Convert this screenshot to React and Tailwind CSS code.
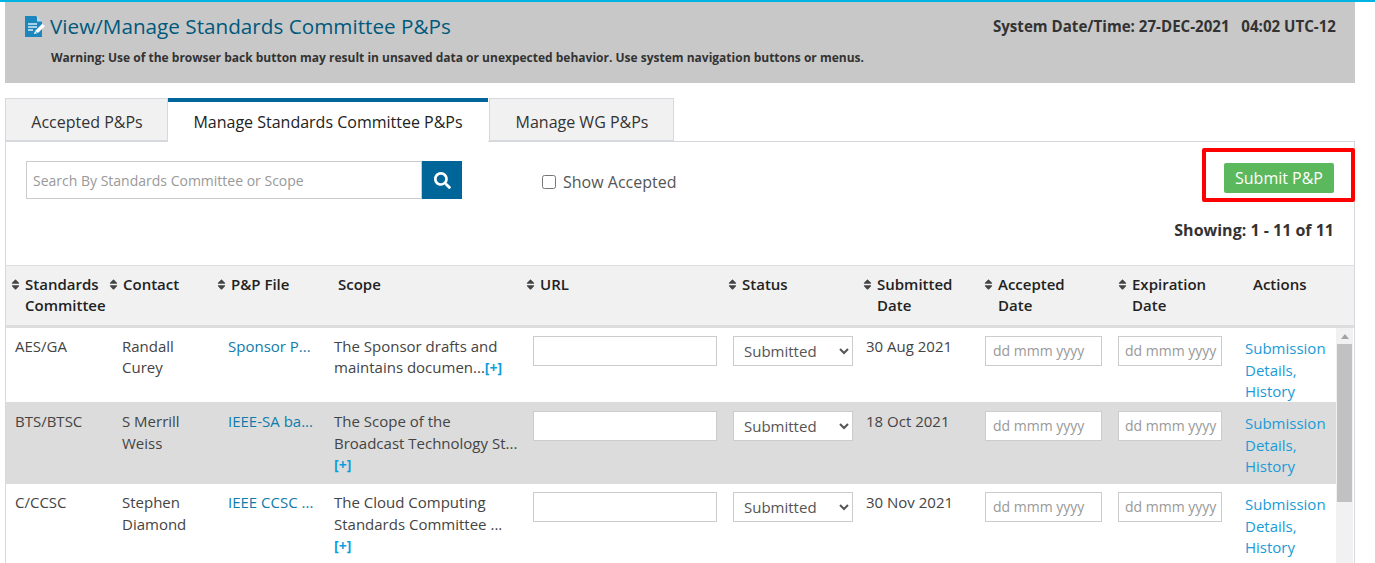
import { FaSearch, FaSort } from 'react-icons/fa';

const rows = [
  {
    committee: 'AES/GA',
    contact: ['Randall', 'Curey'],
    file: 'Sponsor P...',
    scope: ['The Sponsor drafts and', 'maintains documen...'],
    inlineMore: true,
    submitted: '30 Aug 2021',
    height: 'h-[74px]',
    bg: 'bg-white',
    top: 'pt-[8px]',
    linksTop: 'pt-[10px]',
    leading: 'leading-[21px]',
  },
  {
    committee: 'BTS/BTSC',
    contact: ['S Merrill', 'Weiss'],
    file: 'IEEE-SA ba...',
    scope: ['The Scope of the', 'Broadcast Technology St...'],
    submitted: '18 Oct 2021',
    height: 'h-[82px]',
    bg: 'bg-[#dcdcdc]',
    top: 'pt-[9px]',
    linksTop: 'pt-[11px]',
    leading: 'leading-[21.5px]',
  },
  {
    committee: 'C/CCSC',
    contact: ['Stephen', 'Diamond'],
    file: 'IEEE CCSC ...',
    scope: ['The Cloud Computing', 'Standards Committee ...'],
    submitted: '30 Nov 2021',
    height: 'h-[82px]',
    bg: 'bg-white',
    top: 'pt-[8px]',
    linksTop: 'pt-[10px]',
    leading: 'leading-[21.5px]',
  },
];

const headers = [
  { lines: ['Standards', 'Committee'], sort: true, w: 'w-[97px]', pad: 'pl-[5px]' },
  { lines: ['Contact'], sort: true, w: 'w-[108px]', pad: 'pl-[6px]' },
  { lines: ['P&P File'], sort: true, w: 'w-[121px]', pad: 'pl-[6px]' },
  { lines: ['Scope'], w: 'w-[188px]', pad: 'pl-[6px]' },
  { lines: ['URL'], sort: true, w: 'w-[202px]', pad: 'pl-[6px]' },
  { lines: ['Status'], sort: true, w: 'w-[135px]', pad: 'pl-[6px]' },
  { lines: ['Submitted', 'Date'], sort: true, w: 'w-[121px]', pad: 'pl-[6px]' },
  { lines: ['Accepted', 'Date'], sort: true, w: 'w-[134px]', pad: 'pl-[6px]' },
  { lines: ['Expiration', 'Date'], sort: true, w: 'w-[135px]', pad: 'pl-[6px]' },
  { lines: ['Actions'], w: 'w-[100px]', pad: 'pl-[6px]' },
];

const DocIcon = () => (
  <svg width="20" height="21" viewBox="0 0 20 21" className="shrink-0 ml-[1px]">
    <path d="M0 0h11l6 6v15H0z" fill="#1b87bd" />
    <path d="M12 0l5 5.5h-5z" fill="#bcd9e8" />
    <path d="M3 8h9M3 11h9M3 14h5" stroke="#d8ecf5" strokeWidth="1.4" />
    <path d="M9 18l1-3 7-7 3 2-7 7z" fill="#fff" />
    <path d="M10.5 15.5l2.5 2" stroke="#1b87bd" strokeWidth="0.8" />
  </svg>
);

const Tab = ({ label, active, width }) => (
  <div
    className={
      active
        ? `${width} h-[44px] -mb-px bg-white border-t-4 border-[#006699] text-[16px] text-[#222] flex items-center justify-center relative`
        : `${width} h-[43px] bg-[#f1f1f1] border border-[#d5d8dc] text-[16px] text-[#333] flex items-center justify-center pl-[1px] pt-[4px]`
    }
  >
    {label}
  </div>
);

const DateInput = ({ width, pad }) => (
  <input
    type="text"
    placeholder="dd mmm yyyy"
    className={`${width} ${pad} h-[30px] pb-[2px] bg-white border border-[#ccc] text-[14px] text-[#555] placeholder:text-[#999] outline-none`}
  />
);

const TableRow = ({ row }) => (
  <div className={`flex ${row.height} ${row.bg} text-[15px] leading-[21.5px] text-[#444] overflow-hidden`}>
    <div className={`w-[107px] pl-[9px] ${row.top}`}>{row.committee}</div>
    <div className={`w-[106px] pl-[9px] ${row.top} ${row.leading}`}>
      {row.contact[0]}
      <br />
      {row.contact[1]}
    </div>
    <div className={`w-[106px] pl-[9px] ${row.top} text-[#0f7cab] whitespace-nowrap`}>{row.file}</div>
    <div className={`w-[199px] pl-[9px] ${row.top} ${row.leading} whitespace-nowrap`}>
      {row.scope[0]}
      <br />
      {row.scope[1]}
      {!row.inlineMore && <br />}
      <span className="font-bold text-[14px] text-[#0d9ddb]">[+]</span>
    </div>
    <div className={`w-[200px] pl-[9px] ${row.top}`}>
      <input type="text" className="w-[184px] h-[30px] bg-white border border-[#ccc] outline-none" />
    </div>
    <div className={`w-[133px] pl-[9px] ${row.top}`}>
      <select className="w-[120px] h-[30px] bg-white border border-[#ccc] pl-[6px] text-[15px] text-[#555] outline-none">
        <option>Submitted</option>
      </select>
    </div>
    <div className={`w-[119px] pl-[9px] ${row.top}`}>{row.submitted}</div>
    <div className={`w-[133px] pl-[9px] ${row.top}`}>
      <DateInput width="w-[117px]" pad="pl-[7px]" />
    </div>
    <div className={`w-[127px] pl-[9px] ${row.top}`}>
      <DateInput width="w-[104px]" pad="pl-[6px]" />
    </div>
    <div className={`w-[100px] pl-[9px] ${row.linksTop} text-[#1a9bd7]`}>
      Submission
      <br />
      Details,
      <br />
      History
    </div>
  </div>
);

export default function App() {
  return (
    <div className="relative h-[563px] overflow-hidden bg-white border-t-2 border-[#00b5e2] font-['Open_Sans',sans-serif]">
      <div className="ml-[5px] w-[1350px]">
        {/* page header */}
        <div className="h-[81px] bg-[#c8c8c8] pl-[19px] pr-[19px]">
          <div className="flex items-start justify-between pt-[12px]">
            <div className="flex items-center gap-[5px]">
              <DocIcon />
              <h1 className="text-[20.7px] leading-[24px] text-[#00597c]">View/Manage Standards Committee P&amp;Ps</h1>
            </div>
            <div className="pt-[2px] text-[15.1px] leading-[20px] font-bold text-[#333] whitespace-pre">
              System Date/Time: 27-DEC-2021{'   '}04:02 UTC-12
            </div>
          </div>
          <p className="pl-[27px] mt-[12px] text-[12px] leading-[16px] font-bold text-[#333]">
            Warning: Use of the browser back button may result in unsaved data or unexpected behavior. Use system
            navigation buttons or menus.
          </p>
        </div>

        {/* tabs */}
        <div className="flex items-end mt-[14px] h-[44px] relative">
          <Tab label="Accepted P&Ps" width="w-[163px]" />
          <Tab label="Manage Standards Committee P&Ps" active width="w-[320px]" />
          <div className="w-px" />
          <Tab label="Manage WG P&Ps" width="w-[185px]" />
        </div>

        {/* panel */}
        <div className="border-t border-l border-r border-[#d5d8dc] h-[500px]">
          <div className="flex items-start justify-between h-[123px] pl-[20px] pr-[20px]">
            <div className="flex items-start pt-[19px]">
              <div className="flex w-[436px] h-[38px]">
                <input
                  type="text"
                  placeholder="Search By Standards Committee or Scope"
                  className="flex-1 min-w-0 border border-[#ccc] pl-[6px] text-[14px] text-[#555] placeholder:text-[#999] outline-none"
                />
                <button className="w-[40px] bg-[#006699] flex items-center justify-center text-white text-[17px]">
                  <FaSearch />
                </button>
              </div>
              <label className="flex items-center ml-[80px] mt-[10px] text-[16px] leading-[22px] text-[#555]">
                <input type="checkbox" className="w-[14px] h-[14px] mr-[7px]" />
                Show Accepted
              </label>
            </div>
            <div className="flex flex-col items-end pt-[21px]">
              <button className="w-[110px] h-[30px] bg-[#5cb85c] rounded-[2px] text-white text-[16px]">Submit P&amp;P</button>
              <div className="mt-[24px] text-[16px] leading-[26px] font-bold text-[#333]">Showing: 1 - 11 of 11</div>
            </div>
          </div>

          {/* table head */}
          <div className="flex h-[63px] bg-[#f1f1f1] border-t border-b-[3px] border-[#ddd] text-[15px] leading-[21px] font-semibold text-[#222]">
            {headers.map((h) => (
              <div key={h.lines[0]} className={`${h.w} ${h.pad} shrink-0 flex pt-[8px]`}>
                {h.sort && <FaSort className="w-[9px] h-[13px] mt-[4px] mr-[5px] shrink-0 text-[#444]" />}
                <div>
                  {h.lines.map((line) => (
                    <div key={line}>{line}</div>
                  ))}
                </div>
              </div>
            ))}
          </div>

          {/* table body with scrollbar */}
          <div className="flex">
            <div className="w-[1330px]">
              {rows.map((row) => (
                <TableRow key={row.committee} row={row} />
              ))}
            </div>
            <div className="w-[17px] h-[300px] bg-[#f1f1f1] flex flex-col items-center">
              <div className="h-[16px] flex items-center justify-center">
                <div className="w-0 h-0 border-l-[4px] border-r-[4px] border-b-[5px] border-l-transparent border-r-transparent border-b-[#a3a3a3]" />
              </div>
              <div className="w-[15px] h-[158px] bg-[#c1c1c1]" />
            </div>
          </div>
        </div>
      </div>

      {/* annotation drawn over the screenshot */}
      <div className="absolute left-[1202px] top-[146px] w-[153px] h-[54px] border-[4px] border-[#ff0000] rounded-[2px]" />
    </div>
  );
}
